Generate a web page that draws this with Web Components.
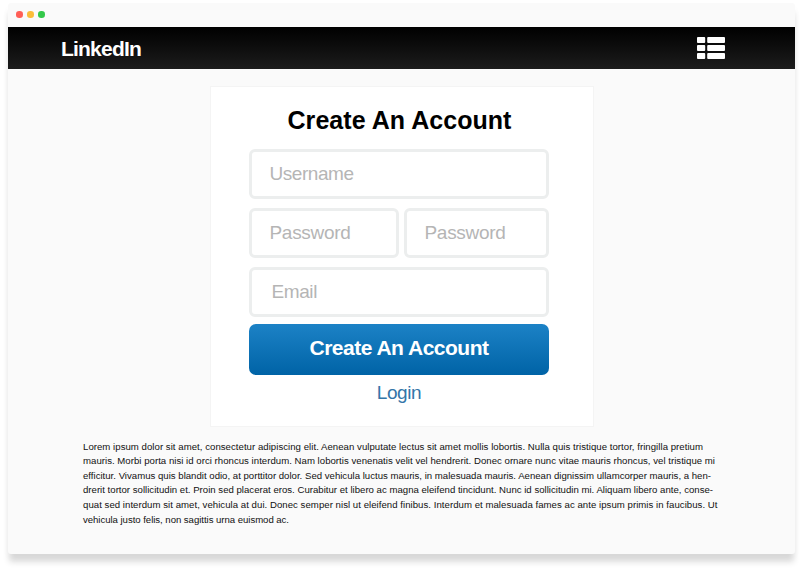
<!DOCTYPE html>
<html lang="en">
<head>
<meta charset="utf-8">
<title>Create An Account</title>
<style>
html,body{margin:0;height:100%;background:#fff;overflow:hidden}
body{font-family:"Liberation Sans",Arial,sans-serif;color:#000}
</style>
</head>
<body>
<browser-window>
  <site-header slot="header"><fit-text width="80">LinkedIn</fit-text></site-header>
  <signup-card>
    <fit-text slot="title" width="224">Create An Account</fit-text>
    <text-field><fit-text width="84">Username</fit-text></text-field>
    <field-row>
      <text-field><fit-text width="81">Password</fit-text></text-field>
      <text-field><fit-text width="81">Password</fit-text></text-field>
    </field-row>
    <text-field style="--indent:19.5px"><fit-text width="45.5">Email</fit-text></text-field>
    <primary-button slot="action"><fit-text width="179">Create An Account</fit-text></primary-button>
    <fit-text slot="link" width="44.5">Login</fit-text>
  </signup-card>
  <text-block>
    <fit-text width="620">Lorem ipsum dolor sit amet, consectetur adipiscing elit. Aenean vulputate lectus sit amet mollis lobortis. Nulla quis tristique tortor, fringilla pretium</fit-text>
    <fit-text width="632">mauris. Morbi porta nisi id orci rhoncus interdum. Nam lobortis venenatis velit vel hendrerit. Donec ornare nunc vitae mauris rhoncus, vel tristique mi</fit-text>
    <fit-text width="628">efficitur. Vivamus quis blandit odio, at porttitor dolor. Sed vehicula luctus mauris, in malesuada mauris. Aenean dignissim ullamcorper mauris, a hen-</fit-text>
    <fit-text width="630">drerit tortor sollicitudin et. Proin sed placerat eros. Curabitur et libero ac magna eleifend tincidunt. Nunc id sollicitudin mi. Aliquam libero ante, conse-</fit-text>
    <fit-text width="634.5">quat sed interdum sit amet, vehicula at dui. Donec semper nisl ut eleifend finibus. Interdum et malesuada fames ac ante ipsum primis in faucibus. Ut</fit-text>
    <fit-text width="206">vehicula justo felis, non sagittis urna euismod ac.</fit-text>
  </text-block>
</browser-window>
<script>
function define(name, markup) {
  const template = document.createElement('template');
  template.innerHTML = markup;
  customElements.define(name, class extends HTMLElement {
    constructor() {
      super();
      this.attachShadow({mode: 'open'}).append(template.content.cloneNode(true));
    }
  });
}

define('browser-window', `
<style>
:host{display:block;box-sizing:border-box;padding:3px 8px 20px;height:574px}
.window{height:551px;display:flex;flex-direction:column;background:#fafafa;border-radius:3px;box-shadow:0 9px 6px -1px rgba(0,0,0,.14),0 4px 8px rgba(0,0,0,.025)}
.bar{height:24px;flex:none;display:flex;align-items:center;gap:4.6px;padding-left:8.2px;box-sizing:border-box}
i{width:6.4px;height:6.4px;border-radius:50%;margin-top:-1px}
</style>
<div class="window">
  <div class="bar"><i style="background:#ff5f57"></i><i style="background:#fbbd3a"></i><i style="background:#34c84a"></i></div>
  <slot name="header"></slot>
  <slot></slot>
</div>`);

define('site-header', `
<style>
:host{flex:none;display:flex;justify-content:space-between;align-items:center;box-sizing:border-box;height:42px;padding:0 70px 0 53px;background:linear-gradient(#000,#1c1c1c);color:#fff;font-weight:bold;font-size:21px;line-height:24px}
svg{display:block}
::slotted(*){margin-top:1px}
</style>
<slot></slot>
<svg width="28" height="22" viewBox="0 0 28 22" fill="#fff">
  <rect y="0" width="8.2" height="6" rx=".9"/><rect x="10.2" y="0" width="17.8" height="6" rx=".9"/>
  <rect y="8" width="8.2" height="6" rx=".9"/><rect x="10.2" y="8" width="17.8" height="6" rx=".9"/>
  <rect y="16" width="8.2" height="6" rx=".9"/><rect x="10.2" y="16" width="17.8" height="6" rx=".9"/>
</svg>`);

define('signup-card', `
<style>
:host{flex:none;display:flex;flex-direction:column;box-sizing:border-box;width:384px;height:341px;margin:17px 0 0 202px;padding:19px 44px 0 38px;background:#fff;border:1px solid #f4f4f4}
h1{margin:0 0 15px;font-size:25px;line-height:28px;display:flex;justify-content:center;padding-left:1px}
.fields{display:flex;flex-direction:column;gap:9px}
.action{margin-top:7px}
.link{display:flex;justify-content:center;margin-top:7px;font-size:19px;line-height:22px;color:#3375a8}
</style>
<h1><slot name="title"></slot></h1>
<div class="fields"><slot></slot></div>
<div class="action"><slot name="action"></slot></div>
<div class="link"><slot name="link"></slot></div>`);

define('field-row', `
<style>:host{display:grid;grid-template-columns:150px 145px;gap:5px}</style><slot></slot>`);

define('text-field', `
<style>:host{display:flex;align-items:center;box-sizing:border-box;height:50px;padding-left:var(--indent,17.5px);border:3px solid #eceeee;border-radius:6px;background:#fff;font-size:19px;line-height:22px;color:#b5b5b5}</style>
<slot></slot>`);

define('primary-button', `
<style>:host{display:flex;align-items:center;justify-content:center;box-sizing:border-box;height:51px;padding-bottom:4px;border-radius:7px;background:linear-gradient(#1c82c6,#0063a6);color:#fff;font-weight:bold;font-size:21px;line-height:24px}</style>
<slot></slot>`);

define('text-block', `
<style>:host{display:flex;flex-direction:column;align-items:flex-start;padding:12.7px 0 0 75px;font-size:9.6px;line-height:14.6px;color:#111}</style>
<slot></slot>`);

// Tracks a single line of text to the advance width given in its width attribute.
customElements.define('fit-text', class extends HTMLElement {
  constructor() {
    super();
    this.attachShadow({mode: 'open'}).innerHTML =
      '<style>:host{display:block;flex:none;white-space:nowrap;width:max-content}</style><slot></slot>';
  }
  connectedCallback() {
    this.style.letterSpacing = '0';
    const gap = (this.getAttribute('width') - this.getBoundingClientRect().width) / this.textContent.length;
    this.style.letterSpacing = gap.toFixed(4) + 'px';
  }
});
</script>
</body>
</html>
